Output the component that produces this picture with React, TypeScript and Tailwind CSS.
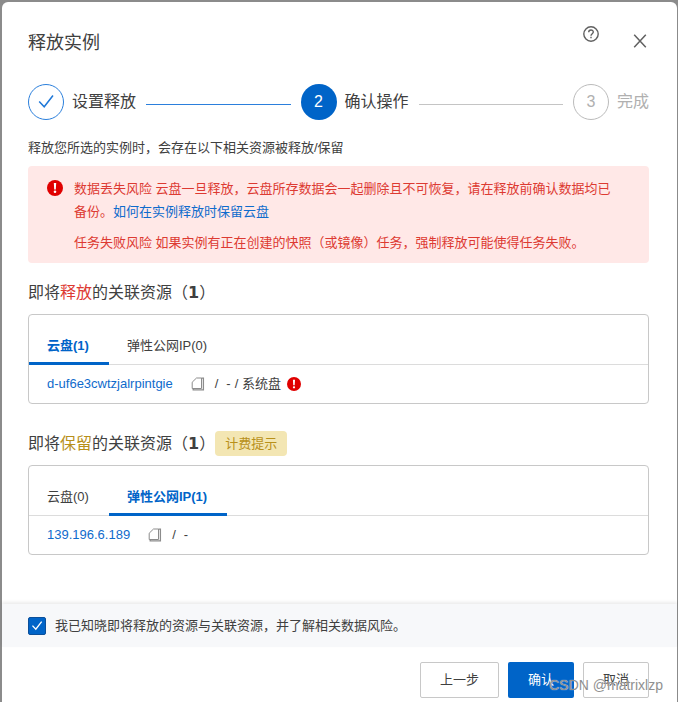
import type { ReactNode } from "react";

function CheckIcon({ className }: { className: string }) {
  return (
    <svg viewBox="0 0 18 18" className={className} fill="none" stroke="currentColor" aria-hidden="true">
      <path d="M2.2 8.5 7.2 13.8 16 2.5" />
    </svg>
  );
}

function AlertIcon({ className }: { className: string }) {
  return (
    <svg viewBox="0 0 16 16" className={className} aria-hidden="true">
      <circle cx="8" cy="8" r="8" fill="#e00000" />
      <path d="M6.8 3h2.4l-.4 6.4H7.2z" fill="#fff" />
      <circle cx="8" cy="11.8" r="1.3" fill="#fff" />
    </svg>
  );
}

function CopyButton() {
  return (
    <button type="button" aria-label="复制" className="text-[#8c8c8c]">
      <svg viewBox="0 0 14 14" className="h-3.5 w-3.5" fill="none" stroke="currentColor" aria-hidden="true">
        <path d="M5.5 1H10.5V11.5H1.2V5.2Z" />
        <path d="M10.5 1.2H12.4V12.8H2.2V11.5" strokeWidth="1.3" />
      </svg>
    </button>
  );
}

type Tab = { label: string; active?: boolean };

function ResourceBox({ tabs, children }: { tabs: Tab[]; children: ReactNode }) {
  return (
    <div className="rounded border border-[#c8c8c8]">
      <div role="tablist" className="flex h-[50px] border-b border-[#dcdcdc]">
        {tabs.map((tab) => (
          <button
            key={tab.label}
            type="button"
            role="tab"
            aria-selected={!!tab.active}
            className={
              tab.active
                ? "-mb-px border-b-[3px] border-[#0064c8] pt-3.5 pr-5 pl-[18px] font-bold text-[#0064c8]"
                : "pt-3 pr-5 pl-[18px]"
            }
          >
            {tab.label}
          </button>
        ))}
      </div>
      <div className="flex h-[38px] items-center px-[18px]">{children}</div>
    </div>
  );
}

const boldDigit = "font-['DejaVu_Sans',sans-serif] font-bold";

export default function App() {
  return (
    <div className="relative flex min-h-screen flex-col bg-[#8b8b8b] pt-0.5 pr-px pl-0.5 font-['Liberation_Sans','Noto_Sans_CJK_SC',sans-serif] text-[13px] text-[#404040]">
      <main className="flex flex-1 flex-col rounded-t-md bg-white">
        <div className="pr-7 pb-[49px] pl-[26px]">
          <header className="flex h-[82px] items-center">
            <h1 className="flex-1 text-lg leading-6">释放实例</h1>
            <button type="button" aria-label="帮助" className="mr-[34px] mb-[18px] text-[#606060]">
              <svg viewBox="0 0 16 16" className="h-4 w-4" fill="none" stroke="currentColor" strokeWidth="1.4" aria-hidden="true">
                <circle cx="8" cy="8" r="7.2" />
                <path d="M5.7 6.2C5.7 3.2 10.3 3.2 10.3 6.1 10.3 7.7 8 7.8 8 9.8" />
                <path d="M8 10.8V12.3" />
              </svg>
            </button>
            <button type="button" aria-label="关闭" className="mr-0.5 mb-1 text-[#606060]">
              <svg viewBox="0 0 14 14" className="h-3.5 w-3.5" fill="none" stroke="currentColor" strokeWidth="1.5" aria-hidden="true">
                <path d="M1.2 .8 12.8 13.2M12.8 .8 1.2 13.2" />
              </svg>
            </button>
          </header>

          <ol className="flex items-center text-base leading-9">
            <li className="flex flex-1 items-center">
              <span className="flex h-9 w-9 items-center justify-center rounded-full border border-[#2b7fdc] text-[#1f78d8]">
                <CheckIcon className="h-[18px] w-[18px] stroke-[1.5]" />
              </span>
              <span className="ml-2">设置释放</span>
              <span className="mx-2.5 mt-1 h-px flex-1 bg-[#2b7fdc]" />
            </li>
            <li className="flex flex-1 items-center">
              <span className="flex h-9 w-9 items-center justify-center rounded-full bg-[#0064c8] text-white">2</span>
              <span className="ml-2">确认操作</span>
              <span className="mx-2.5 mt-1 h-px flex-1 bg-[#c4c4c4]" />
            </li>
            <li className="flex items-center text-[#b0b0b0]">
              <span className="flex h-9 w-9 items-center justify-center rounded-full border border-[#bbb]">3</span>
              <span className="ml-2">完成</span>
            </li>
          </ol>

          <p className="pt-[18px] pb-2 leading-5">释放您所选的实例时，会存在以下相关资源被释放/保留</p>

          <div role="alert" className="flex rounded-sm bg-[#ffe8e7] pt-[11px] pr-4 pb-[9px] pl-[19px] leading-[23px] text-[#dd3a32]">
            <AlertIcon className="mt-[3px] h-4 w-4 shrink-0" />
            <div className="ml-[11px]">
              <p>
                数据丢失风险 云盘一旦释放，云盘所存数据会一起删除且不可恢复，请在释放前确认数据均已
                <br />
                备份。
                <a href="#retain" className="text-[#0f6bcc]">
                  如何在实例释放时保留云盘
                </a>
              </p>
              <p className="mt-2">任务失败风险 如果实例有正在创建的快照（或镜像）任务，强制释放可能使得任务失败。</p>
            </div>
          </div>

          <h2 className="flex h-[51px] items-center pt-2 text-base">
            <span>
              即将<span className="text-[#dd3a32]">释放</span>的关联资源（<span className={boldDigit}>1</span>）
            </span>
          </h2>
          <ResourceBox tabs={[{ label: "云盘(1)", active: true }, { label: "弹性公网IP(0)" }]}>
            <a href="#disk" className="mr-[18px] text-[#0f6bcc]">
              d-uf6e3cwtzjalrpintgie
            </a>
            <CopyButton />
            <span className="ml-2.5">/</span>
            <span className="mr-1 ml-2">-</span>
            <span className="mr-1.5">/ 系统盘</span>
            <AlertIcon className="h-3.5 w-3.5" />
          </ResourceBox>

          <h2 className="flex h-[61px] items-center pt-[18px] text-base">
            <span>
              即将<span className="text-[#b8901a]">保留</span>的关联资源（<span className={boldDigit}>1</span>）
            </span>
            <span className="rounded-sm bg-[#f3e6b3] px-2.5 text-[13px] leading-[25px] text-[#b8901a]">计费提示</span>
          </h2>
          <ResourceBox tabs={[{ label: "云盘(0)" }, { label: "弹性公网IP(1)", active: true }]}>
            <a href="#ip" className="mr-[18px] text-[#0f6bcc]">
              139.196.6.189
            </a>
            <CopyButton />
            <span className="ml-2.5">/</span>
            <span className="ml-2">-</span>
          </ResourceBox>
        </div>

        <div className="flex h-[43px] items-center bg-[#f7f8fa] px-[26px] shadow-[0_-2px_3px_rgba(0,0,0,0.08)]">
          <label className="flex items-center">
            <span className="relative h-[18px] w-[18px]">
              <input
                type="checkbox"
                defaultChecked
                className="peer block h-[18px] w-[18px] appearance-none rounded-xs border border-[#0b4f9a] bg-white checked:bg-[#0064c8]"
              />
              <CheckIcon className="pointer-events-none absolute top-[3px] left-[3px] hidden h-3 w-3 stroke-2 text-white peer-checked:block" />
            </span>
            <span className="ml-[9px]">我已知晓即将释放的资源与关联资源，并了解相关数据风险。</span>
          </label>
        </div>

        <footer className="flex justify-end gap-[9px] pt-[15px] pr-7 pb-1 pl-[26px]">
          <button type="button" className="h-9 rounded-xs border border-[#c8c8c8] px-[19px]">上一步</button>
          <button type="button" className="h-9 rounded-xs bg-[#0064c8] px-5 text-white">确认</button>
          <button type="button" className="h-9 rounded-xs border border-[#c8c8c8] px-[19px]">取消</button>
        </footer>
      </main>
      <span className="pointer-events-none absolute right-[15px] bottom-[7px] text-sm text-[#909090] [text-shadow:0_0_1px_#fff]">
        CSDN @matrixlzp
      </span>
    </div>
  );
}
